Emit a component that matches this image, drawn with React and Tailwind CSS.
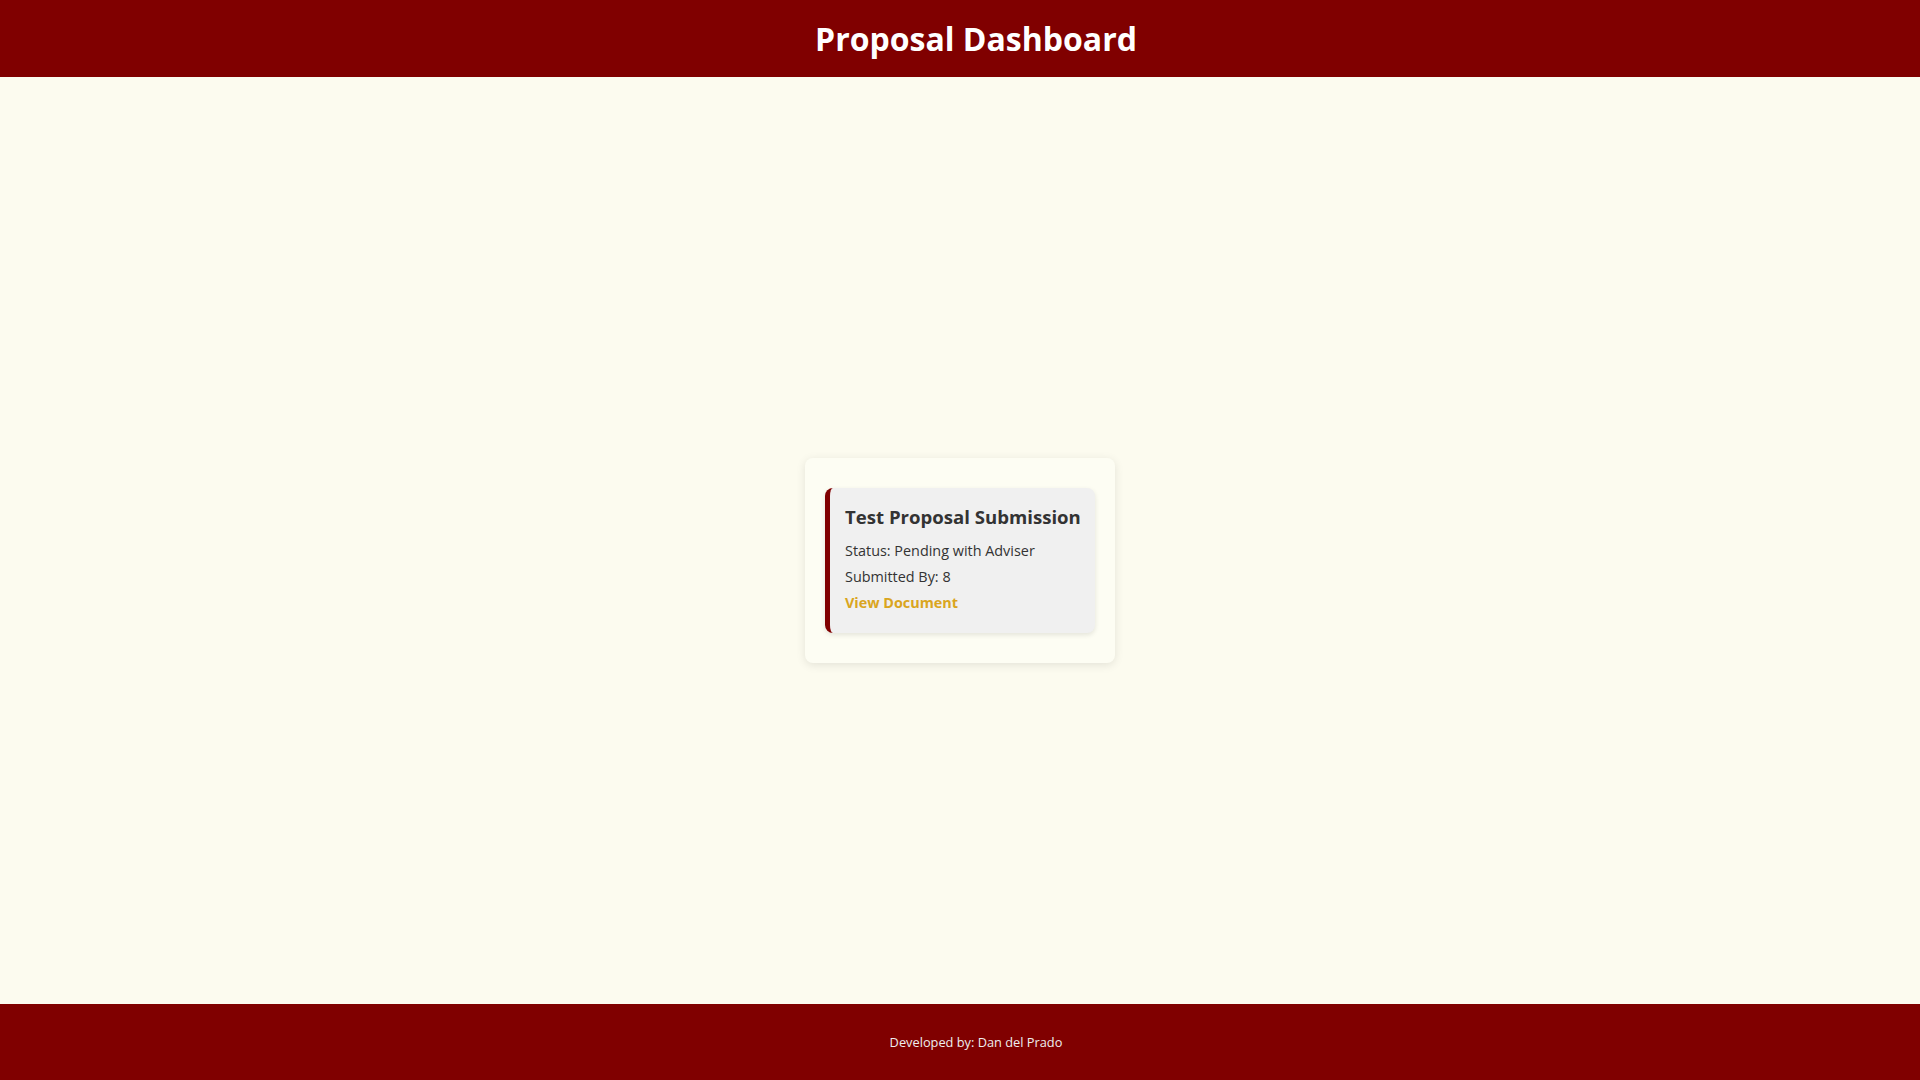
export default function App() {
	const proposals = [
		{ id: 1, title: "Test Proposal Submission", status: "Pending with Adviser", submittedBy: 8 },
	];

	return (
		<div className="min-h-screen flex flex-col bg-[#fcfbef] font-['Open_Sans',sans-serif]">
			<header className="h-[77px] shrink-0 bg-[#800000] flex items-center justify-center pl-8">
				<h1 className="text-[32px] font-bold text-white leading-none">Proposal Dashboard</h1>
			</header>

			<main className="flex-1 flex items-center justify-center pt-10">
				<div className="w-[310px] px-5 py-5 rounded-lg bg-[#fdfdf3] shadow-[0_2px_10px_rgba(0,0,0,0.1)]">
					{proposals.map((p) => (
						<div
							key={p.id}
							className="my-[10px] border-l-[5px] border-[#800000] rounded-lg bg-[#f0f0f0] pt-[17px] pb-[17px] pl-[15px] pr-[10px] shadow-[0_2px_5px_rgba(0,0,0,0.1)]"
						>
							<h3 className="text-[18.6px] font-bold text-[#333] leading-[1.2] whitespace-nowrap mt-[1px] mb-[9px]">{p.title}</h3>
							<p className="text-[14.4px] text-[#333] leading-[26px]">Status: {p.status}</p>
							<p className="text-[14.4px] text-[#333] leading-[26px]">Submitted By: {p.submittedBy}</p>
							<a href="#" className="block text-[14.4px] font-bold text-[#daa520] leading-[26px]">
								View Document
							</a>
						</div>
					))}
				</div>
			</main>

			<footer className="h-[76px] shrink-0 bg-[#800000] flex items-center justify-center pl-8 pt-[2px]">
				<p className="text-[12.8px] text-[#eeeeee]">Developed by: Dan del Prado</p>
			</footer>
		</div>
	);
}
